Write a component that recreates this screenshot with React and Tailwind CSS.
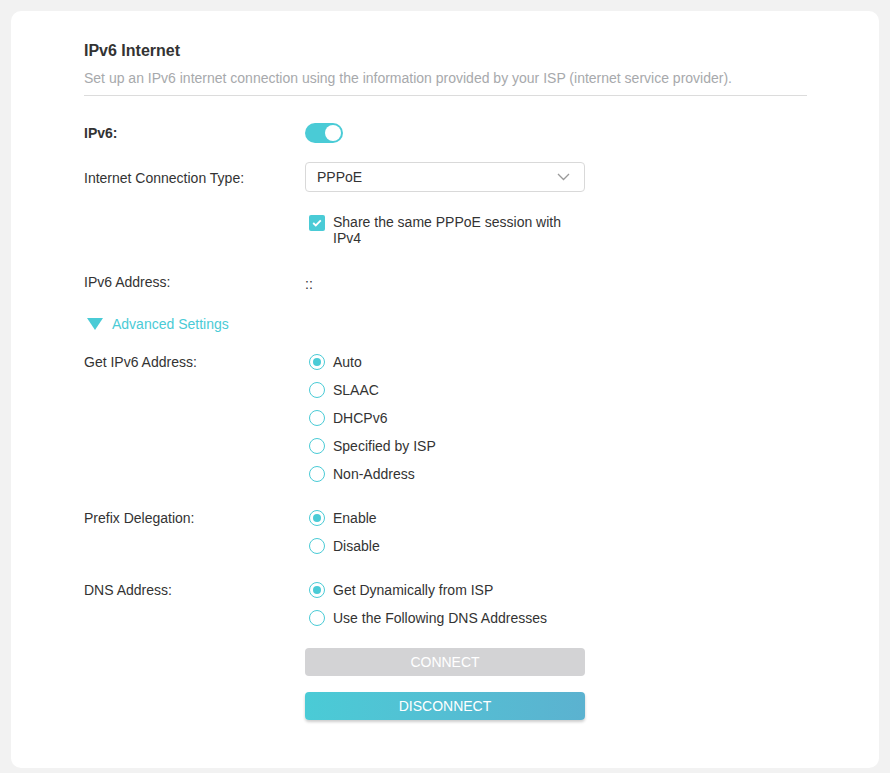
import { useState } from 'react'

const font = { fontFamily: '"Liberation Sans", Arial, sans-serif' }

function Row({ label, bold, children, className = '' }) {
  return (
    <div className={`flex ${className}`}>
      <div className={`w-[221px] shrink-0 text-[14px] leading-[20px] text-[#333] ${bold ? 'font-bold' : ''}`}>
        {label}
      </div>
      <div className="flex-1">{children}</div>
    </div>
  )
}

function Radio({ checked, label, onClick }) {
  return (
    <button type="button" onClick={onClick} className="flex items-center h-[20px] pl-[4px] gap-[8px] text-[14px] text-[#333]">
      <span className="w-[16px] h-[16px] rounded-full border border-[#4acbd6] flex items-center justify-center">
        {checked && <span className="w-[8px] h-[8px] rounded-full bg-[#4acbd6]" />}
      </span>
      {label}
    </button>
  )
}

function RadioGroup({ options, value, onChange }) {
  return (
    <div className="flex flex-col gap-[8px]">
      {options.map((o) => (
        <Radio key={o} label={o} checked={value === o} onClick={() => onChange(o)} />
      ))}
    </div>
  )
}

export default function App() {
  const [ipv6, setIpv6] = useState(true)
  const [share, setShare] = useState(true)
  const [addr, setAddr] = useState('Auto')
  const [prefix, setPrefix] = useState('Enable')
  const [dns, setDns] = useState('Get Dynamically from ISP')

  return (
    <div className="min-h-screen bg-[#f2f2f2] p-[11px]" style={font}>
      <div className="bg-white rounded-[10px] h-[757px] w-[868px] pt-[30px] pl-[73px] pr-[72px]">
        {/* header */}
        <h1 className="text-[16px] leading-[20px] font-bold text-[#333]">IPv6 Internet</h1>
        <p className="mt-[7px] text-[14px] leading-[20px] text-[#a7a9ac]">
          Set up an IPv6 internet connection using the information provided by your ISP (internet service provider).
        </p>
        <div className="mt-[7px] border-t border-[#dcdcdc]" />

        <Row label="IPv6:" bold className="mt-[27px]">
          <button
            type="button"
            onClick={() => setIpv6(!ipv6)}
            className={`w-[38px] h-[20px] rounded-full flex items-center px-[2px] ${ipv6 ? 'bg-[#4acbd6] justify-end' : 'bg-[#ccc] justify-start'}`}
          >
            <span className="w-[16px] h-[16px] rounded-full bg-white" />
          </button>
        </Row>

        <Row label="Internet Connection Type:" className="mt-[20px] items-center">
          <div className="w-[280px] h-[30px] border border-[#d9d9d9] rounded-[4px] flex items-center justify-between pl-[11px] pr-[14px] text-[14px] text-[#333] -mt-[1px]">
            PPPoE
            <svg width="13" height="8" viewBox="0 0 13 8" fill="none">
              <path d="M1 1l5.5 5.5L12 1" stroke="#9a9a9a" strokeWidth="1.3" />
            </svg>
          </div>
        </Row>

        <Row label="" className="mt-[22px]">
          <button type="button" onClick={() => setShare(!share)} className="flex items-start gap-[8px] pl-[4px] text-left">
            <span className={`mt-[1px] w-[16px] h-[16px] rounded-[2px] shrink-0 flex items-center justify-center ${share ? 'bg-[#4acbd6]' : 'border border-[#4acbd6]'}`}>
              {share && (
                <svg width="10" height="8" viewBox="0 0 10 8" fill="none">
                  <path d="M1.2 4l2.6 2.5L8.8 1.4" stroke="white" strokeWidth="1.8" />
                </svg>
              )}
            </span>
            <span className="w-[240px] text-[14px] leading-[16px] text-[#333]">Share the same PPPoE session with IPv4</span>
          </button>
        </Row>

        <Row label="IPv6 Address:" className="mt-[26px]">
          <span className="text-[14px] leading-[20px] text-[#333]">::</span>
        </Row>

        {/* advanced */}
        <button type="button" className="mt-[18px] flex items-center gap-[9px] pl-[3px] h-[20px] text-[14px] text-[#4acbd6]">
          <svg width="16" height="12" viewBox="0 0 16 12">
            <path d="M0 0h16L8 12z" fill="#4acbd6" />
          </svg>
          Advanced Settings
        </button>

        <Row label="Get IPv6 Address:" className="mt-[18px]">
          <RadioGroup
            options={['Auto', 'SLAAC', 'DHCPv6', 'Specified by ISP', 'Non-Address']}
            value={addr}
            onChange={setAddr}
          />
        </Row>

        <Row label="Prefix Delegation:" className="mt-[24px]">
          <RadioGroup options={['Enable', 'Disable']} value={prefix} onChange={setPrefix} />
        </Row>

        <Row label="DNS Address:" className="mt-[24px]">
          <RadioGroup
            options={['Get Dynamically from ISP', 'Use the Following DNS Addresses']}
            value={dns}
            onChange={setDns}
          />
        </Row>

        <Row label="" className="mt-[20px]">
          <div className="flex flex-col gap-[16px] w-[280px]">
            <button type="button" disabled className="h-[28px] rounded-[4px] bg-[#d3d3d5] text-white text-[14px]">
              CONNECT
            </button>
            <button
              type="button"
              className="h-[28px] rounded-[4px] bg-gradient-to-r from-[#4acbd6] to-[#5bb2d0] text-white text-[14px] shadow-[0_2px_3px_rgba(0,0,0,0.2)]"
            >
              DISCONNECT
            </button>
          </div>
        </Row>
      </div>
    </div>
  )
}
